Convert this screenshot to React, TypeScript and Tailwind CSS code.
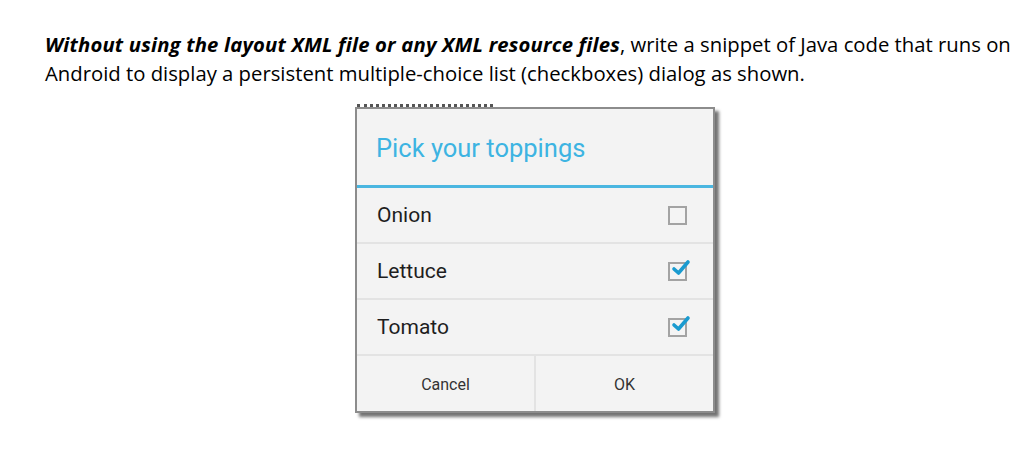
import React from "react";

function Check({ checked }: { checked: boolean }) {
  return (
    <div className="relative w-[19px] h-[19px] border-2 border-[#a3a3a3] bg-[#f4f4f4]">
      {checked && (
        <svg className="absolute left-[1px] -top-[6px]" width="20" height="20" viewBox="0 0 20 20">
          <path d="M3 11 L7.5 15 L17 4" fill="none" stroke="#1a9bd0" strokeWidth="3.6" strokeLinecap="round" strokeLinejoin="round" />
        </svg>
      )}
    </div>
  );
}

function Row({ label, checked }: { label: string; checked: boolean }) {
  return (
    <div className="h-[56px] flex items-center justify-between pl-[20px] pr-[26px] border-b-2 border-[#e3e3e3]">
      <span className="text-[21px] text-[#1e1e1e] pt-[2px]">{label}</span>
      <Check checked={checked} />
    </div>
  );
}

export default function App() {
  return (
    <div className="w-[1024px] h-[454px] bg-white overflow-hidden" style={{ fontFamily: "Roboto, 'Noto Sans', sans-serif" }}>
      <div className="pt-[30px] pl-[45px] text-[20.3px] leading-[29px] text-black whitespace-nowrap" style={{ fontFamily: "'Open Sans', 'Noto Sans', sans-serif" }}>
        <div>
          <b className="italic font-bold tracking-[0.17px]">Without using the layout XML file or any XML resource files</b>, write a snippet of Java code that runs on
        </div>
        <div>Android to display a persistent multiple-choice list (checkboxes) dialog as shown.</div>
      </div>
      <div className="ml-[357px] mt-[16px] w-[136px] border-t-[3px] border-dotted border-[#555]" />
      <div className="ml-[355px] w-[360px] border-2 border-[#8c8c8c] bg-[#f3f3f3] shadow-[4px_4px_3px_rgba(0,0,0,0.55)]">
        <div className="h-[76px] flex items-center pl-[19px] pt-[3px]">
          <span className="text-[25.5px] text-[#3db4e2]">Pick your toppings</span>
        </div>
        <div className="h-[3px] bg-[#4ab6e0]" />
        <Row label="Onion" checked={false} />
        <Row label="Lettuce" checked={true} />
        <Row label="Tomato" checked={true} />
        <div className="h-[55px] flex">
          <div className="flex-1 flex items-center justify-center border-r-2 border-[#e3e3e3] text-[16px] text-[#333] pt-[2px]">Cancel</div>
          <div className="flex-1 flex items-center justify-center text-[16px] text-[#333] pt-[2px]">OK</div>
        </div>
      </div>
    </div>
  );
}
